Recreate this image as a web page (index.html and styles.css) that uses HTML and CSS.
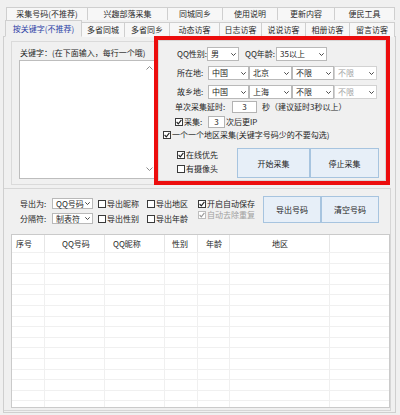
FILE: index.html
```html
<!DOCTYPE html>
<html lang="zh-CN">
<head>
<meta charset="utf-8">
<title>QQ采集</title>
<link rel="stylesheet" href="styles.css">
</head>
<body>
<div class="win">
  <div class="tabs tabs1">
    <div class="tab">采集号码(不推荐)</div>
    <div class="tab">兴趣部落采集</div>
    <div class="tab">同城同乡</div>
    <div class="tab">使用说明</div>
    <div class="tab">更新内容</div>
    <div class="tab">便民工具</div>
  </div>
  <div class="tabs tabs2">
    <div class="tab active">按关键字(不推荐)</div>
    <div class="tab">多省同城</div>
    <div class="tab">多省同乡</div>
    <div class="tab">动态访客</div>
    <div class="tab">日志访客</div>
    <div class="tab">说说访客</div>
    <div class="tab">相册访客</div>
    <div class="tab">留言访客</div>
  </div>
  <div class="panel">
    <div class="top">
      <div class="kw-group">
        <div class="kw-label">关键字：(在下面输入，每行一个哦)</div>
        <div class="textarea">
          <div class="vscroll">
            <svg class="sarrow" width="7" height="4" viewBox="0 0 7 4"><polyline points="0.5,3.5 3.5,0.5 6.5,3.5" fill="none" stroke="#8a8a8a" stroke-width="1"/></svg>
            <svg class="sarrow" width="7" height="4" viewBox="0 0 7 4"><polyline points="0.5,0.5 3.5,3.5 6.5,0.5" fill="none" stroke="#8a8a8a" stroke-width="1"/></svg>
          </div>
        </div>
      </div>
      <div class="redbox">
        <div class="inner">
          <div class="row r1">
            <span class="lbl w30">QQ性别:</span>
            <div class="sel w32"><span>男</span><svg width="5" height="3" viewBox="0 0 5 3"><polyline points="0.3,0.3 2.5,2.5 4.7,0.3" fill="none" stroke="#333" stroke-width="0.9"/></svg></div>
            <span class="lbl w31 ml6">QQ年龄:</span>
            <div class="sel w51"><span>35以上</span><svg width="5" height="3" viewBox="0 0 5 3"><polyline points="0.3,0.3 2.5,2.5 4.7,0.3" fill="none" stroke="#333" stroke-width="0.9"/></svg></div>
          </div>
          <div class="row r2">
            <span class="lbl w31">所在地:</span>
            <div class="sel w41"><span>中国</span><svg width="5" height="3" viewBox="0 0 5 3"><polyline points="0.3,0.3 2.5,2.5 4.7,0.3" fill="none" stroke="#333" stroke-width="0.9"/></svg></div>
            <div class="sel w43"><span>北京</span><svg width="5" height="3" viewBox="0 0 5 3"><polyline points="0.3,0.3 2.5,2.5 4.7,0.3" fill="none" stroke="#333" stroke-width="0.9"/></svg></div>
            <div class="sel w42"><span>不限</span><svg width="5" height="3" viewBox="0 0 5 3"><polyline points="0.3,0.3 2.5,2.5 4.7,0.3" fill="none" stroke="#333" stroke-width="0.9"/></svg></div>
            <div class="sel w43 disabled"><span>不限</span><svg width="5" height="3" viewBox="0 0 5 3"><polyline points="0.3,0.3 2.5,2.5 4.7,0.3" fill="none" stroke="#333" stroke-width="0.9"/></svg></div>
          </div>
          <div class="row r3">
            <span class="lbl w31">故乡地:</span>
            <div class="sel w41"><span>中国</span><svg width="5" height="3" viewBox="0 0 5 3"><polyline points="0.3,0.3 2.5,2.5 4.7,0.3" fill="none" stroke="#333" stroke-width="0.9"/></svg></div>
            <div class="sel w43"><span>上海</span><svg width="5" height="3" viewBox="0 0 5 3"><polyline points="0.3,0.3 2.5,2.5 4.7,0.3" fill="none" stroke="#333" stroke-width="0.9"/></svg></div>
            <div class="sel w42"><span>不限</span><svg width="5" height="3" viewBox="0 0 5 3"><polyline points="0.3,0.3 2.5,2.5 4.7,0.3" fill="none" stroke="#333" stroke-width="0.9"/></svg></div>
            <div class="sel w43 disabled"><span>不限</span><svg width="5" height="3" viewBox="0 0 5 3"><polyline points="0.3,0.3 2.5,2.5 4.7,0.3" fill="none" stroke="#333" stroke-width="0.9"/></svg></div>
          </div>
          <div class="row r4">
            <span class="lbl w57">单次采集延时:</span>
            <div class="inp w25">3</div>
            <span class="lbl ml5">秒（建议延时3秒以上）</span>
          </div>
          <div class="row r5">
            <span class="cb w33"><span class="box"><svg width="6" height="6" viewBox="0 0 6 6"><polyline points="0.6,3 2.3,4.8 5.4,0.8" fill="none" stroke="#222" stroke-width="1.1"/></svg></span>采集:</span>
            <div class="inp w17">3</div>
            <span class="lbl ml1">次后更IP</span>
          </div>
          <div class="row r6">
            <span class="cb"><span class="box"><svg width="6" height="6" viewBox="0 0 6 6"><polyline points="0.6,3 2.3,4.8 5.4,0.8" fill="none" stroke="#222" stroke-width="1.1"/></svg></span>一个一个地区采集(关键字号码少的不要勾选)</span>
          </div>
          <div class="row r7">
            <div class="opts">
              <span class="cb"><span class="box"><svg width="6" height="6" viewBox="0 0 6 6"><polyline points="0.6,3 2.3,4.8 5.4,0.8" fill="none" stroke="#222" stroke-width="1.1"/></svg></span>在线优先</span>
              <span class="cb"><span class="box"></span>有摄像头</span>
            </div>
            <div class="btn w73">开始采集</div>
            <div class="btn w69">停止采集</div>
          </div>
        </div>
      </div>
    </div>
    <div class="bottom">
      <div class="export">
        <div class="ex-left">
          <div class="exrow">
            <span class="lbl w32">导出为:</span>
            <div class="sel w41 small"><span>QQ号码</span><svg width="5" height="3" viewBox="0 0 5 3"><polyline points="0.3,0.3 2.5,2.5 4.7,0.3" fill="none" stroke="#333" stroke-width="0.9"/></svg></div>
            <span class="cb w49 ml5"><span class="box"></span>导出昵称</span>
            <span class="cb"><span class="box"></span>导出地区</span>
          </div>
          <div class="exrow second">
            <span class="lbl w32">分隔符:</span>
            <div class="sel w41 small"><span>制表符</span><svg width="5" height="3" viewBox="0 0 5 3"><polyline points="0.3,0.3 2.5,2.5 4.7,0.3" fill="none" stroke="#333" stroke-width="0.9"/></svg></div>
            <span class="cb w49 ml5"><span class="box"></span>导出性别</span>
            <span class="cb"><span class="box"></span>导出年龄</span>
          </div>
        </div>
        <div class="ex-right">
          <span class="cb"><span class="box"><svg width="6" height="6" viewBox="0 0 6 6"><polyline points="0.6,3 2.3,4.8 5.4,0.8" fill="none" stroke="#222" stroke-width="1.1"/></svg></span>开启自动保存</span>
          <span class="cb disabled"><span class="box"><svg width="6" height="6" viewBox="0 0 6 6"><polyline points="0.6,3 2.3,4.8 5.4,0.8" fill="none" stroke="#9a9a9a" stroke-width="1.1"/></svg></span>自动去除重复</span>
        </div>
        <div class="btn w58">导出号码</div>
        <div class="btn w58">清空号码</div>
      </div>
      <div class="table">
        <div class="thead">
          <div class="th p4">序号</div>
          <div class="th p17">QQ号码</div>
          <div class="th p8">QQ昵称</div>
          <div class="th p7">性别</div>
          <div class="th p8">年龄</div>
          <div class="th p42">地区</div>
          <div class="th last"></div>
        </div>
        <div class="tbody">
          <div class="col"></div>
          <div class="col"></div>
          <div class="col"></div>
          <div class="col"></div>
          <div class="col"></div>
          <div class="col"></div>
          <div class="col last"></div>
        </div>
      </div>
    </div>
  </div>
</div>
</body>
</html>
```
FILE: styles.css
```css
* { box-sizing: border-box; }
html, body { margin: 0; padding: 0; }
body {
  background: #f0f0f0;
  font-family: "Noto Sans CJK SC", "Noto Sans", sans-serif;
  font-size: 8px;
  color: #1e1e1e;
  width: 400px;
  height: 415px;
  overflow: hidden;
}
.win { width: 400px; }

/* tabs */
.tabs { display: grid; }
.tabs1 {
  grid-template-columns: 82px 80px 55px 55px 57px 60px;
  margin-left: 6px;
  padding-top: 7px;
}
.tabs2 {
  grid-template-columns: 77px 43px 45px 50px 42px 44px 44px 45px;
  margin-left: 5px;
  margin-bottom: -1px;
  align-items: end;
}
.tab {
  background: #f7f7f7;
  border-top: 1px solid #cfcfcf;
  border-right: 1px solid #cfcfcf;
  text-align: center;
  white-space: nowrap;
  color: #2a2a2a;
}
.tab:first-child { border-left: 1px solid #cfcfcf; }
.tabs1 .tab { height: 13px; line-height: 12px; }
.tabs2 .tab { height: 15px; line-height: 14px; }
.tabs2 .tab.active {
  height: 17px;
  line-height: 15px;
  background: #f0f0f0;
  color: #2b3fa6;
  border-bottom: 1px solid #f0f0f0;
  position: relative;
  z-index: 1;
}

/* panel */
.panel {
  margin-left: 3px;
  width: 393px;
  height: 377px;
  border: 1px solid #cfcfcf;
  background: #f0f0f0;
}
.top { display: flex; height: 148px; }

.kw-group {
  margin-left: 7px;
  margin-top: 4px;
  width: 143px;
  height: 144px;
  border: 1px solid #dadada;
  border-right: none;
  padding: 6px 0 0 7px;
}
.kw-label { line-height: 10px; height: 10px; padding-left: 1px; white-space: nowrap; }
.textarea {
  margin-top: 2px;
  width: 136px;
  height: 119px;
  background: #fff;
  border: 1px solid #bdbdbd;
  display: flex;
  justify-content: flex-end;
}
.vscroll {
  width: 10px;
  height: 100%;
  display: flex;
  flex-direction: column;
  justify-content: space-between;
  align-items: center;
  padding: 5px 0 7px;
}
.sarrow { display: block; }

/* red box */
.redbox {
  margin-top: -1px;
  width: 236px;
  height: 149px;
  border: 4px solid #ec0d0d;
}
.inner {
  height: 100%;
  border: 1px solid #d6d6d6;
  display: flex;
  flex-direction: column;
}
.row { display: flex; align-items: center; white-space: nowrap; }
.r1 { margin-top: 6px; height: 14px; padding-left: 18px; }
.r2 { margin-top: 5px; height: 14px; padding-left: 18px; }
.r3 { margin-top: 5px; height: 14px; padding-left: 18px; }
.r4 { margin-top: 2px; height: 12px; padding-left: 16px; }
.r5 { margin-top: 3px; height: 12px; padding-left: 16px; }
.r6 { margin-top: 2px; height: 10px; padding-left: 4px; }
.r7 { margin-top: 8px; height: 30px; align-items: stretch; }

.lbl { line-height: 10px; white-space: nowrap; flex: none; }
.w30 { width: 30px; }
.w31 { width: 31px; }
.w32 { width: 32px; }
.w33 { width: 33px; }
.w57 { width: 57px; }
.w17 { width: 17px; }
.w25 { width: 25px; }
.w41 { width: 41px; }
.w42 { width: 42px; }
.w43 { width: 43px; }
.w49 { width: 49px; }
.w51 { width: 51px; }
.w58 { width: 58px; }
.w69 { width: 69px; }
.w73 { width: 73px; }
.ml1 { margin-left: 1px; }
.ml5 { margin-left: 5px; }
.ml6 { margin-left: 6px; }

.sel {
  flex: none;
  height: 100%;
  background: #fff;
  border: 1px solid #b9b9b9;
  display: flex;
  align-items: center;
  justify-content: space-between;
  padding: 0 2px 0 3px;
  line-height: 10px;
}
.sel svg { display: block; }
.sel.disabled { color: #a3a3a3; border-color: #d2d2d2; }
.sel.small { height: 11px; }

.inp {
  flex: none;
  height: 100%;
  background: #fff;
  border: 1px solid #b3b3b3;
  text-align: center;
  line-height: 10px;
}

.cb {
  display: inline-flex;
  align-items: center;
  white-space: nowrap;
  line-height: 10px;
  flex: none;
}
.box {
  width: 8px;
  height: 8px;
  border: 1px solid #3a3a3a;
  background: #fff;
  margin-right: 1px;
  display: inline-flex;
  align-items: center;
  justify-content: center;
  flex: none;
}
.box svg { display: block; }
.cb.disabled { color: #a0a0a0; }
.cb.disabled .box { border-color: #bdbdbd; }

.opts {
  width: 78px;
  padding: 2px 0 0 18px;
  display: flex;
  flex-direction: column;
  gap: 4px;
}
.btn {
  flex: none;
  background: #e7eff8;
  border: 1px solid #a7c4df;
  display: flex;
  align-items: center;
  justify-content: center;
  white-space: nowrap;
}

/* bottom group */
.bottom {
  margin-top: 3px;
  width: 387px;
  height: 223px;
  border: 1px solid #d6d6d6;
  border-left: none;
}
.export { display: flex; margin-top: 7px; height: 27px; }
.ex-left { width: 194px; padding-left: 16px; display: flex; flex-direction: column; }
.exrow { display: flex; align-items: center; height: 11px; margin-top: 2px; }
.exrow.second { margin-top: 4px; }
.ex-right { width: 65px; display: flex; flex-direction: column; padding-top: 3px; gap: 1px; }
.ex-right .cb { height: 10px; }
.export .btn { height: 27px; }

.table {
  margin-top: 11px;
  margin-left: 7px;
  width: 379px;
  height: 174px;
  background: #fff;
  border: 1px solid #cacaca;
  display: flex;
  flex-direction: column;
}
.thead, .tbody {
  display: grid;
  grid-template-columns: 33px 60px 60px 33px 32px 100px 1fr;
}
.thead { height: 17px; }
.th {
  border-right: 1px solid #e6e6e6;
  line-height: 17px;
  white-space: nowrap;
}
.th.last, .col.last { border-right: none; }
.p4 { padding-left: 4px; }
.p7 { padding-left: 7px; }
.p8 { padding-left: 8px; }
.p17 { padding-left: 17px; }
.p42 { padding-left: 42px; }
.tbody {
  flex: 1;
  background: repeating-linear-gradient(to bottom, #f0f0f0 0, #f0f0f0 1px, transparent 1px, transparent 10.6px);
}
.col { border-right: 1px solid #f0f0f0; }
```
